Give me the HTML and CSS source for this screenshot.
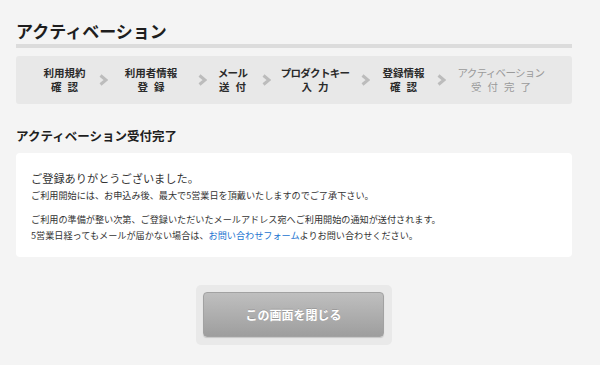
FILE: index.html
```html
<!DOCTYPE html>
<html lang="ja">
<head>
    <meta charset="UTF-8">
    <meta name="viewport" content="width=device-width, initial-scale=1.0">
    <title>アクティベーション</title>
    <link rel="stylesheet" href="styles.css">
</head>
<body>
    <div class="container">
        <h1 class="title">アクティベーション</h1>

        <div class="steps">
            <div class="step"><span>利用規約</span><span class="sub">確認</span></div>
            <svg class="arrow" width="9" height="12" viewBox="0 0 9 12"><polyline points="1.5,1.5 7,6 1.5,10.5" /></svg>
            <div class="step"><span>利用者情報</span><span class="sub">登録</span></div>
            <svg class="arrow" width="9" height="12" viewBox="0 0 9 12"><polyline points="1.5,1.5 7,6 1.5,10.5" /></svg>
            <div class="step"><span class="kana">メール</span><span class="sub">送付</span></div>
            <svg class="arrow" width="9" height="12" viewBox="0 0 9 12"><polyline points="1.5,1.5 7,6 1.5,10.5" /></svg>
            <div class="step"><span class="kana">プロダクトキー</span><span class="sub">入力</span></div>
            <svg class="arrow" width="9" height="12" viewBox="0 0 9 12"><polyline points="1.5,1.5 7,6 1.5,10.5" /></svg>
            <div class="step"><span>登録情報</span><span class="sub">確認</span></div>
            <svg class="arrow" width="9" height="12" viewBox="0 0 9 12"><polyline points="1.5,1.5 7,6 1.5,10.5" /></svg>
            <div class="step current"><span class="kana">アクティベーション</span><span class="sub">受付完了</span></div>
        </div>

        <h2 class="subtitle">アクティベーション受付完了</h2>

        <div class="panel">
            <p class="lead">ご登録ありがとうございました。</p>
            <p class="note">ご利用開始には、お申込み後、最大で5営業日を頂戴いたしますのでご了承下さい。</p>
            <p class="note">ご利用の準備が整い次第、ご登録いただいたメールアドレス宛へご利用開始の通知が送付されます。<br>5営業日経ってもメールが届かない場合は、<a href="#">お問い合わせフォーム</a>よりお問い合わせください。</p>
        </div>

        <div class="buttons">
            <div class="button-frame">
                <a class="button" href="#">この画面を閉じる</a>
            </div>
        </div>
    </div>
</body>
</html>
```

FILE: styles.css
```css
body {
    margin: 0;
    background: #f4f4f4;
    color: #333;
    font-family: "Noto Sans CJK JP", "Noto Sans", sans-serif;
}
.container {
    width: 556px;
    margin-left: 16px;
}
.title {
    margin: 19px 0 0;
    padding-bottom: 1px;
    font-size: 17px;
    line-height: 24px;
    font-weight: bold;
    color: #1e1e1e;
    border-bottom: 4px solid #dcdcdc;
}
.steps {
    display: grid;
    grid-template-columns: 69px 9px 86px 13px 51px 13px 88px 11px 67px 9px 110px;
    align-items: center;
    margin-top: 8px;
    height: 48px;
    padding-left: 14px;
    background: #e8e8e8;
    border-radius: 3px;
}
.step {
    display: flex;
    flex-direction: column;
    align-items: center;
    font-size: 10.5px;
    line-height: 14px;
    font-weight: bold;
    color: #2a2a2a;
    white-space: nowrap;
}
.step .kana {
    letter-spacing: -0.7px;
}
.step .sub {
    letter-spacing: 6px;
    text-indent: 6px;
}
.step.current {
    color: #9a9a9a;
    font-weight: normal;
}
.arrow {
    justify-self: end;
}
.arrow polyline {
    fill: none;
    stroke: #bcbcbc;
    stroke-width: 3;
}
.subtitle {
    margin: 23px 0 0;
    font-size: 12.5px;
    line-height: 18px;
    font-weight: bold;
    color: #1e1e1e;
}
.panel {
    margin-top: 8px;
    padding: 16px 15px 14px;
    background: #fff;
    border-radius: 4px;
}
.panel p {
    margin: 0;
}
.lead {
    font-size: 11.2px;
    line-height: 18px;
}
.note {
    font-size: 9.15px;
    line-height: 16px;
}
.note + .note {
    margin-top: 8px;
}
.note a {
    color: #1a73d0;
    text-decoration: none;
}
.buttons {
    display: flex;
    justify-content: center;
    margin-top: 28px;
}
.button-frame {
    padding: 7px 8px 8px 7px;
    background: #e9e9e9;
    border-radius: 5px;
}
.button {
    display: flex;
    align-items: center;
    justify-content: center;
    width: 179px;
    height: 43px;
    border: 1px solid #a2a2a2;
    border-radius: 4px;
    background: linear-gradient(#bfbfbf, #9e9e9e);
    color: #fff;
    font-size: 12px;
    font-weight: bold;
    text-decoration: none;
    text-shadow: 0 -1px 0 rgba(0, 0, 0, 0.15);
    box-shadow: 0 1px 1px rgba(0, 0, 0, 0.15);
}
```
